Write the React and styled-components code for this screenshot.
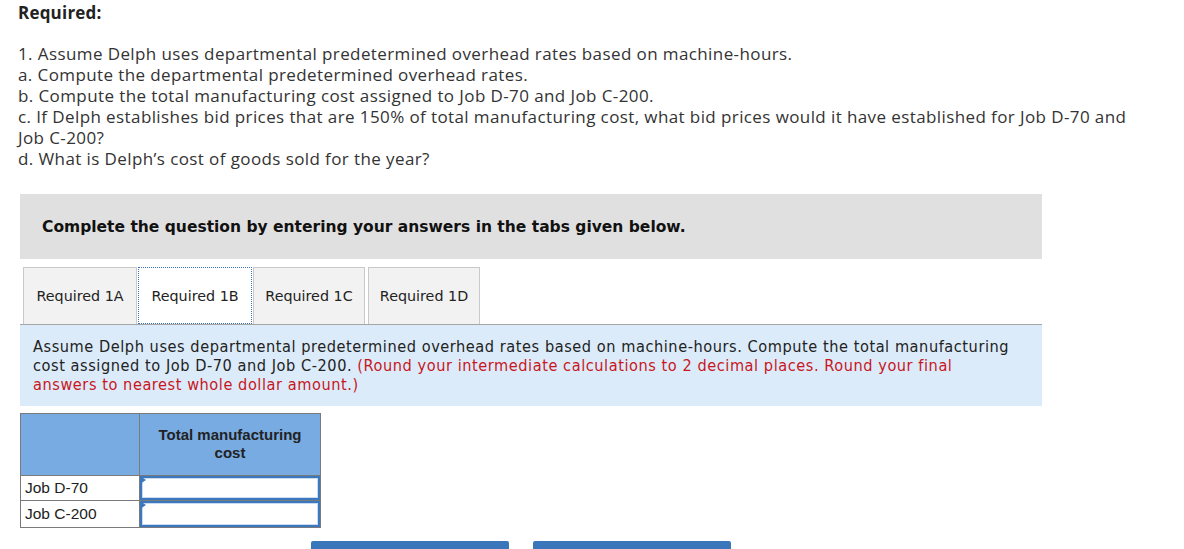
import React from "react";
import styled, { createGlobalStyle } from "styled-components";

const Global = createGlobalStyle`
  html, body { margin: 0; padding: 0; background: #fff; }
  body { font-family: "Open Sans", "Liberation Sans", sans-serif; color: #333; }
`;

const Page = styled.div`
  width: 1184px;
  height: 549px;
  overflow: hidden;
  box-sizing: border-box;
  padding: 2px 0 0 0;
`;

const Intro = styled.div`
  padding-left: 18px;
  width: 1120px;
  font-family: "Open Sans", "Lato", sans-serif;
  font-size: 17px;
  letter-spacing: 0.4px;
  line-height: 21px;
  color: #333;
`;

const Heading = styled.div`
  font-weight: 700;
  color: #222;
  letter-spacing: 0.2px;
  margin-bottom: 20px;
`;

const Line = styled.div``;

const Main = styled.div`
  margin: 25px 0 0 20px;
  width: 1022px;
`;

const Instruction = styled.div`
  background: #e0e0e0;
  height: 65px;
  display: flex;
  align-items: center;
  padding-left: 22px;
  font-family: "DejaVu Sans", Verdana, sans-serif;
  font-weight: 700;
  font-size: 15.5px;
  color: #111;
`;

const Tabs = styled.div`
  display: flex;
  margin: 8px 0 0 3px;
  gap: 1px;
`;

const Tab = styled.div`
  height: 57px;
  box-sizing: border-box;
  width: ${(p) => p.$w}px;
  margin-right: ${(p) => p.$mr || 0}px;
  display: flex;
  align-items: center;
  justify-content: center;
  font-family: "DejaVu Sans", Verdana, sans-serif;
  font-size: 14.3px;
  color: #222;
  background: ${(p) => (p.$active ? "#fff" : "#f2f2f2")};
  border: ${(p) => (p.$active ? "1px dotted #3a74bb" : "1px solid #c9c9c9")};
  border-bottom: ${(p) => (p.$active ? "1px dotted #3a74bb" : "none")};
`;

const Panel = styled.div`
  background: #dcebf9;
  border-top: 1px solid #a5a5a5;
  padding: 12px 24px 12px 13px;
  font-family: "DejaVu Sans Condensed", "DejaVu Sans", Tahoma, sans-serif;
  font-stretch: condensed;
  font-size: 16.2px;
  letter-spacing: 0.55px;
  line-height: 19px;
  color: #222;
`;

const Red = styled.span`
  color: #c8161d;
`;

const Table = styled.table`
  margin-top: 7px;
  border-collapse: collapse;
  font-family: "Liberation Sans", Arial, sans-serif;
  font-size: 15.5px;
  color: #222;
`;

const HeadCell = styled.th`
  background: #78abe2;
  border: 1px solid #7a7a7a;
  height: 62px;
  width: ${(p) => p.$w}px;
  padding: 12px 14px 0;
  vertical-align: top;
  font-weight: 700;
  font-size: 15px;
  line-height: 18px;
  color: #222;
  box-sizing: border-box;
`;

const LabelCell = styled.td`
  border: 1px solid #7a7a7a;
  height: ${(p) => p.$h}px;
  padding: 0 4px;
  box-sizing: border-box;
`;

const InputCell = styled.td`
  border: 1px solid #7a7a7a;
  padding: 0;
  position: relative;
  height: ${(p) => p.$h}px;
  box-sizing: border-box;
`;

const InputBox = styled.div`
  position: absolute;
  inset: 0;
  border: 2px solid #3c78bd;
  box-shadow: inset 0 0 0 1px #c9dcf1;
  background: #fff;
`;

const Marker = styled.div`
  position: absolute;
  left: 0;
  top: 0;
  width: 0;
  height: 0;
  border-top: 4px solid transparent;
  border-bottom: 4px solid transparent;
  border-left: 6px solid #3c78bd;
`;

const Buttons = styled.div`
  display: flex;
  gap: 24px;
  margin: 13px 0 0 291px;
`;

const Btn = styled.div`
  width: 198px;
  height: 20px;
  background: #3a77ba;
  border-radius: 2px 2px 0 0;
`;

export default function App() {
  return (
    <Page>
      <Global />
      <Intro>
        <Heading>Required:</Heading>
        <Line>1. Assume Delph uses departmental predetermined overhead rates based on machine-hours.</Line>
        <Line>a. Compute the departmental predetermined overhead rates.</Line>
        <Line>b. Compute the total manufacturing cost assigned to Job D-70 and Job C-200.</Line>
        <Line>
          c. If Delph establishes bid prices that are 150% of total manufacturing cost, what bid prices would it have established for Job D-70 and Job C-200?
        </Line>
        <Line>d. What is Delph’s cost of goods sold for the year?</Line>
      </Intro>
      <Main>
        <Instruction>Complete the question by entering your answers in the tabs given below.</Instruction>
        <Tabs>
          <Tab $w={114}>Required 1A</Tab>
          <Tab $w={114} $active>Required 1B</Tab>
          <Tab $w={112} $mr={2}>Required 1C</Tab>
          <Tab $w={112}>Required 1D</Tab>
        </Tabs>
        <Panel>
          Assume Delph uses departmental predetermined overhead rates based on machine-hours. Compute the total manufacturing cost assigned to Job D-70 and Job C-200.{" "}
          <Red>(Round your intermediate calculations to 2 decimal places. Round your final answers to nearest whole dollar amount.)</Red>
        </Panel>
        <Table>
          <thead>
            <tr>
              <HeadCell $w={119}></HeadCell>
              <HeadCell $w={181}>Total manufacturing cost</HeadCell>
            </tr>
          </thead>
          <tbody>
            <tr>
              <LabelCell $h={25}>Job D-70</LabelCell>
              <InputCell $h={25}>
                <InputBox />
                <Marker />
              </InputCell>
            </tr>
            <tr>
              <LabelCell $h={27}>Job C-200</LabelCell>
              <InputCell $h={27}>
                <InputBox />
                <Marker />
              </InputCell>
            </tr>
          </tbody>
        </Table>
        <Buttons>
          <Btn />
          <Btn />
        </Buttons>
      </Main>
    </Page>
  );
}
